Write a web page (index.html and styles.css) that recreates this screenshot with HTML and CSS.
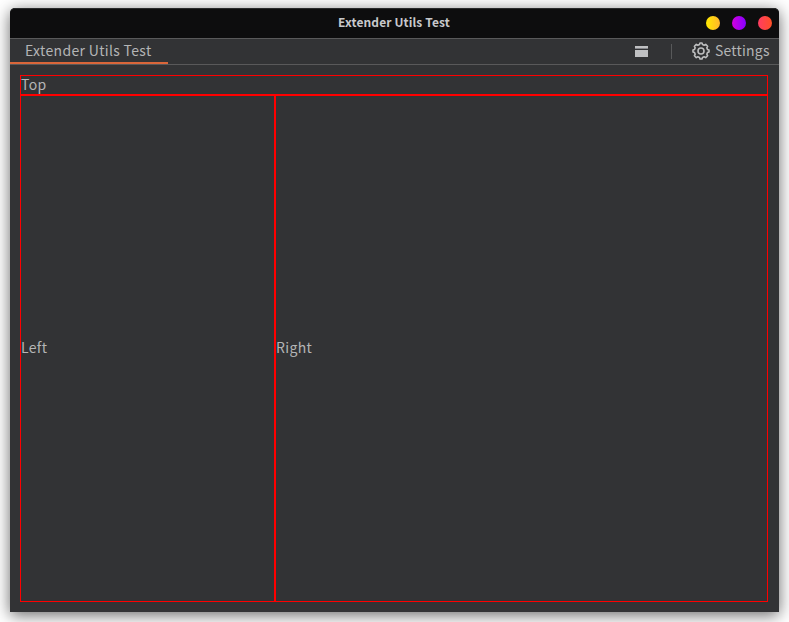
FILE: index.html
```html
<!DOCTYPE html>
<html lang="en">
<head>
<meta charset="utf-8">
<title>Extender Utils Test</title>
<link rel="stylesheet" href="styles.css">
</head>
<body>
<div class="window">
  <header class="titlebar">
    <span class="title">Extender Utils Test</span>
    <div class="controls">
      <i class="dot minimize"></i><i class="dot maximize"></i><i class="dot close"></i>
    </div>
  </header>
  <nav class="menubar">
    <div class="tab"><span class="tab-label">Extender Utils Test</span></div>
    <svg class="panel-icon" width="13" height="11" viewBox="0 0 13 11"><path fill="#bfc0c2" d="M0 0h13v2H0zM0 4h13v7H0z"/><path fill="#85868a" d="M0 2h13v1H0z"/></svg>
    <i class="divider"></i>
    <svg class="gear" width="18" height="18" viewBox="0 0 18 18" fill="none" stroke="#bdbebf" stroke-width="1.6" stroke-linejoin="round"><path d="M7.5 2.5 8 1h2l.5 1.5 1.7.7 1.5-.8 1.9 1.9-.8 1.5.7 1.7L17 8v2l-1.5.5-.7 1.7.8 1.5-1.9 1.9-1.5-.8-1.7.7L10 17H8l-.5-1.5-1.7-.7-1.5.8-1.9-1.9.8-1.5-.7-1.7L1 10V8l1.5-.5.7-1.7-.8-1.5 1.9-1.9 1.5.8z"/><circle cx="9" cy="9" r="3"/></svg>
    <span class="settings">Settings</span>
  </nav>
  <main class="content">
    <section class="pane top"><span class="label">Top</span></section>
    <div class="split">
      <section class="pane left"><span class="label">Left</span></section>
      <section class="pane right"><span class="label">Right</span></section>
    </div>
  </main>
</div>
</body>
</html>
```
FILE: styles.css
```css
* { box-sizing: border-box; }
body {
  margin: 0;
  height: 622px;
  padding: 8px 10px 10px;
  overflow: hidden;
  background: #fff;
  font-family: "Noto Sans CJK SC", "Noto Sans", sans-serif;
  font-size: 14px;
  letter-spacing: .33px;
  line-height: 16px;
  color: #b4b5b6;
}
.window {
  display: flex;
  flex-direction: column;
  height: 604px;
  border-radius: 5px 5px 0 0;
  background: #323335;
  box-shadow: 0 3px 16px rgba(0, 0, 0, .6);
}
.titlebar {
  display: grid;
  grid-template-columns: 1fr auto 1fr;
  align-items: center;
  height: 31px;
  padding: 0 7px 2px 0;
  border-top: 1px solid #292a2b;
  border-bottom: 1px solid #59595a;
  border-radius: 5px 5px 0 0;
  background: #0d0d0e;
}
.title {
  grid-column: 2;
  width: 112px;
  margin: 0 0 2px 6px;
  font-size: 12px;
  font-weight: 700;
  letter-spacing: .12px;
  white-space: nowrap;
  color: #c8c9cc;
}
.controls { display: flex; justify-content: flex-end; gap: 12px; }
.dot { width: 14px; height: 14px; border-radius: 50%; }
.minimize { background: linear-gradient(90deg, #ffea00, #ffb52c); }
.maximize { background: linear-gradient(90deg, #d300e0, #8500ff); }
.close { background: linear-gradient(90deg, #ff3c63, #ff5026); }
.menubar {
  display: flex;
  align-items: center;
  height: 26px;
  padding-right: 10px;
  border-bottom: 1px solid #59595a;
}
.tab {
  width: 158px;
  height: 25px;
  padding: 3px 0 0 15px;
  border-bottom: 2px solid #d9663a;
  white-space: nowrap;
}
.panel-icon { margin-left: auto; }
.divider { width: 1px; height: 15px; margin: 0 20px 0 23px; background: #58595a; }
.gear { margin: 0 5px 1px 0; }
.settings {
  width: 54px;
  margin-bottom: 3px;
  letter-spacing: .2px;
  white-space: nowrap;
}
.content {
  display: flex;
  flex-direction: column;
  flex: 1;
  padding: 10px 11px 10px 10px;
}
.pane { border: 1px solid #f00; }
.top { height: 20px; }
.split { display: flex; flex: 1; }
.left, .right { display: flex; align-items: center; padding-bottom: 4px; }
.left { width: 255px; }
.right { flex: 1; }
.label { display: block; }
```
